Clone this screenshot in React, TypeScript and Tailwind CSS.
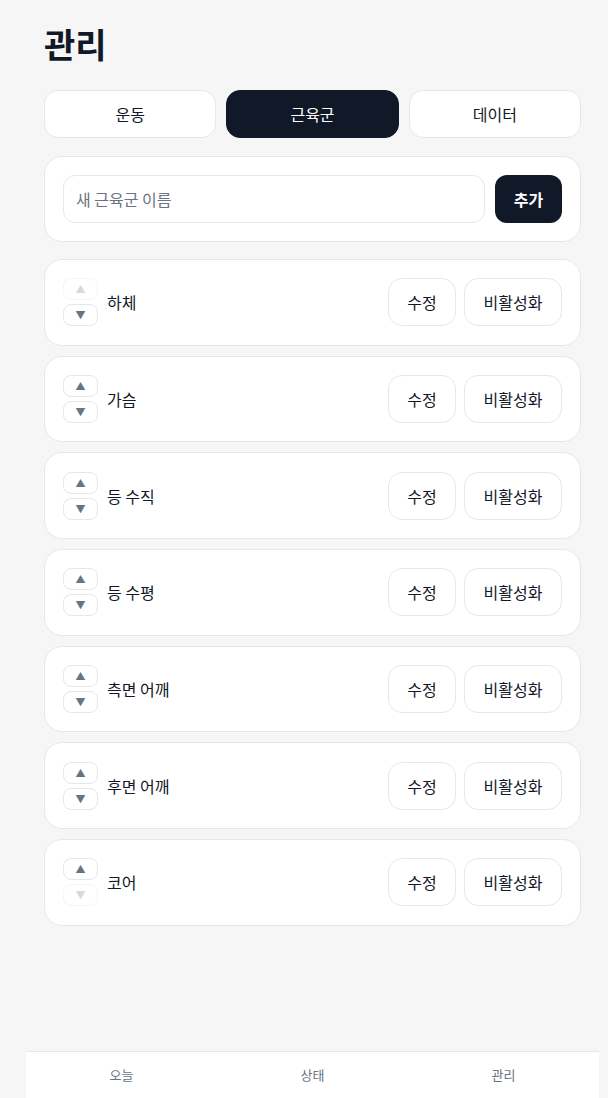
import React from "react";

const items = ["하체", "가슴", "등 수직", "등 수평", "측면 어깨", "후면 어깨", "코어"];

function Row({ name, first, last }: { name: string; first: boolean; last: boolean }) {
  return (
    <div className="flex items-center rounded-[18px] border border-[#e5e7eb] bg-white px-[18px] h-[86.7px]">
      <div className="flex flex-col gap-[4px]">
        <button
          className={`flex h-[22px] w-[35px] items-center justify-center rounded-[8px] border border-[#e5e7eb] bg-white text-[10px] leading-none ${
            first ? "opacity-40 text-[#9ca3af]" : "text-[#6b7280]"
          }`}
        >
          ▲
        </button>
        <button
          className={`flex h-[22px] w-[35px] items-center justify-center rounded-[8px] border border-[#e5e7eb] bg-white text-[10px] leading-none ${
            last ? "opacity-40 text-[#9ca3af]" : "text-[#6b7280]"
          }`}
        >
          ▼
        </button>
      </div>
      <div className="ml-[9px] flex-1 text-[16px] text-[#111827]">{name}</div>
      <div className="flex gap-[8px]">
        <button className="h-[48px] w-[68px] rounded-[14px] border border-[#e5e7eb] bg-white text-[16px] text-[#111827]">
          수정
        </button>
        <button className="h-[48px] w-[98px] rounded-[14px] border border-[#e5e7eb] bg-white text-[16px] text-[#111827]">
          비활성화
        </button>
      </div>
    </div>
  );
}

export default function App() {
  return (
    <div
      className="min-h-[1098px] bg-[#f6f6f6]"
      style={{ fontFamily: '"Noto Sans CJK KR", "Noto Sans", sans-serif' }}
    >
      <div className="ml-[26px] w-[573px] px-[18px] pt-[20px] pb-[80px]">
        <h1 className="text-[34px] font-bold leading-[48px] text-[#111827]">관리</h1>
        <div className="mt-[22px] grid grid-cols-3 gap-[10px]">
          <button className="h-[48px] rounded-[14px] border border-[#e5e7eb] bg-white text-[16px] text-[#111827]">
            운동
          </button>
          <button className="h-[48px] rounded-[14px] border border-[#111827] bg-[#111827] text-[16px] text-white">
            근육군
          </button>
          <button className="h-[48px] rounded-[14px] border border-[#e5e7eb] bg-white text-[16px] text-[#111827]">
            데이터
          </button>
        </div>
        <div className="mt-[18px] flex items-center gap-[10px] rounded-[18px] border border-[#e5e7eb] bg-white px-[18px] h-[86px]">
          <input
            placeholder="새 근육군 이름"
            className="h-[48px] flex-1 rounded-[12px] border border-[#e5e7eb] px-[12px] text-[16px] text-[#111827] outline-none placeholder:text-[#6b7280]"
          />
          <button className="h-[48px] w-[67px] rounded-[12px] bg-[#111827] text-[16px] font-bold text-white">
            추가
          </button>
        </div>
        <div className="mt-[17px] flex flex-col gap-[10px]">
          {items.map((n, i) => (
            <Row key={n} name={n} first={i === 0} last={i === items.length - 1} />
          ))}
        </div>
      </div>
      <nav className="fixed bottom-0 left-[26px] grid h-[47px] w-[573px] grid-cols-3 border-t border-[#e5e7eb] bg-white">
        <div className="flex items-center justify-center text-[13px] text-[#6b7280]">오늘</div>
        <div className="flex items-center justify-center text-[13px] text-[#6b7280]">상태</div>
        <div className="flex items-center justify-center text-[13px] text-[#6b7280]">관리</div>
      </nav>
    </div>
  );
}
